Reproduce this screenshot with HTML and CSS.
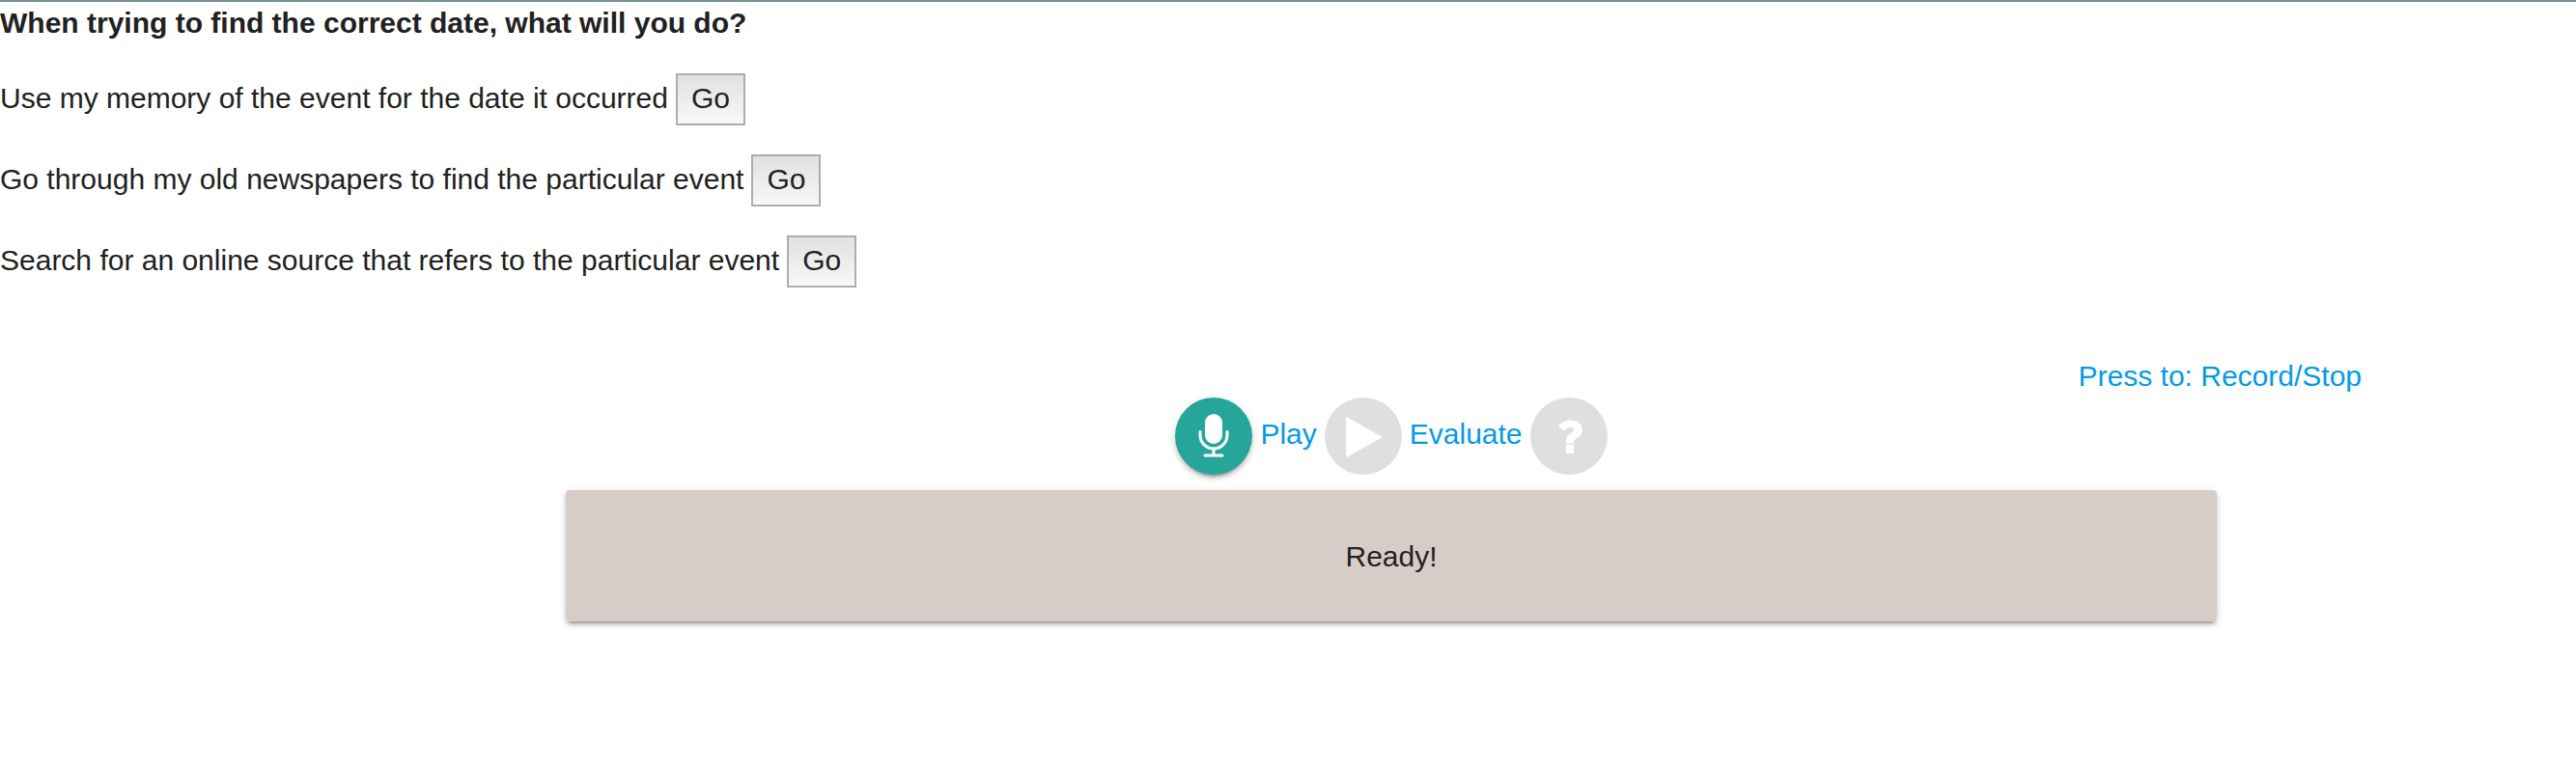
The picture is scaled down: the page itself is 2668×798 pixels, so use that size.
FILE: index.html
```
<!DOCTYPE html>
<html lang="en">
<head>
<meta charset="utf-8">
<meta name="viewport" content="width=device-width, initial-scale=1">
<title>Find the correct date</title>
<link rel="stylesheet" href="styles.css">
</head>
<body>
<main class="page">
  <section class="question">
    <h1 class="question-title">When trying to find the correct date, what will you do?</h1>
    <div class="choice"><span id="choice-memory">Use my memory of the event for the date it occurred</span> <button class="go" type="button" aria-describedby="choice-memory">Go</button></div>
    <div class="choice"><span id="choice-papers">Go through my old newspapers to find the particular event</span> <button class="go" type="button" aria-describedby="choice-papers">Go</button></div>
    <div class="choice"><span id="choice-online">Search for an online source that refers to the particular event</span> <button class="go" type="button" aria-describedby="choice-online">Go</button></div>
  </section>
  <section class="recorder">
    <a class="label record-label" href="#record">Press to: Record/Stop</a>
    <div class="controls">
      <button class="round record" id="record" type="button" aria-label="Record or stop">
        <svg viewBox="0 0 80 80" aria-hidden="true">
          <rect x="31" y="17" width="18" height="31" rx="9" fill="#fff"/>
          <path d="M26 35.500v3.500a14 14 0 0 0 28 0v-3.500M40 53v7M31 60h18" fill="none" stroke="#fff" stroke-width="3" stroke-linecap="round"/>
        </svg>
      </button>
      <a class="label" href="#play">Play</a>
      <button class="round" id="play" type="button" aria-label="Play" disabled>
        <svg viewBox="0 0 80 80" aria-hidden="true">
          <path d="M22.5 20.5 59 41 22.5 61.500Z" fill="#fff" stroke="#fff" stroke-linejoin="round"/>
        </svg>
      </button>
      <a class="label" href="#evaluate">Evaluate</a>
      <button class="round" id="evaluate" type="button" aria-label="Evaluate" disabled>
        <svg viewBox="0 0 80 80" aria-hidden="true">
          <path d="M29 30C32 26 36 23.500 42 23.500C49 23.500 54 27.500 54 33.500C54 38 51 40.500 48.500 42C46 43.500 45 44.500 45 47.500H37C36.500 42.500 38 39.500 41.500 37C44 35.500 45 34.500 45 33C45 31.500 43.500 31 41.500 31C39 31 37 32.500 34.500 34.500Z" fill="#fff"/>
          <rect x="37" y="49" width="8" height="9" rx="1" fill="#fff"/>
        </svg>
      </button>
    </div>
    <div class="status" role="status">Ready!</div>
  </section>
</main>
</body>
</html>
```
FILE: styles.css
```
body {
  margin: 0;
  background: #fff;
  color: #212121;
  font: 30px/44px "Liberation Sans", Arial, sans-serif;
}

.page {
  padding-bottom: 40px;
  border-top: 2px solid #78909c;
}

.question {
  display: flex;
  flex-direction: column;
  gap: 30px;
}

.question-title {
  margin: 0;
  font-size: 30px;
  font-weight: bold;
}

.choice {
  display: flex;
  align-items: baseline;
  gap: 8px;
}

.go {
  box-sizing: border-box;
  margin: 0;
  padding: 2px 14px 4px;
  border: 2px solid #adadad;
  background: linear-gradient(#e1e1e1, #f8f8f8);
  color: inherit;
  font: inherit;
}

.recorder {
  display: grid;
  grid-template-columns: 293fr 855fr 186fr;
  margin-top: 70px;
}

.label {
  color: #039be5;
  text-decoration: none;
}

.record-label {
  grid-column: 1 / -1;
  justify-self: end;
  margin-right: 222px;
}

.controls {
  grid-column: 2;
  display: flex;
  align-items: center;
  justify-content: center;
  gap: 8px;
}

.controls .label {
  padding-bottom: 4px;
}

.round {
  width: 80px;
  height: 80px;
  padding: 0;
  border: 0;
  border-radius: 50%;
  background: #dfdfdf;
}

.round svg {
  display: block;
}

.record {
  background: #26a69a;
  box-shadow: 0 4px 4px rgba(0, 0, 0, 0.14), 0 2px 10px rgba(0, 0, 0, 0.12), 0 6px 2px -4px rgba(0, 0, 0, 0.2);
}

.status {
  grid-column: 2;
  margin-top: 16px;
  padding: 47px 46px 45px;
  border-radius: 4px;
  background: #d7ccc8;
  text-align: center;
  box-shadow: 0 4px 4px rgba(0, 0, 0, 0.14), 0 2px 10px rgba(0, 0, 0, 0.12), 0 6px 2px -4px rgba(0, 0, 0, 0.2);
}
```
